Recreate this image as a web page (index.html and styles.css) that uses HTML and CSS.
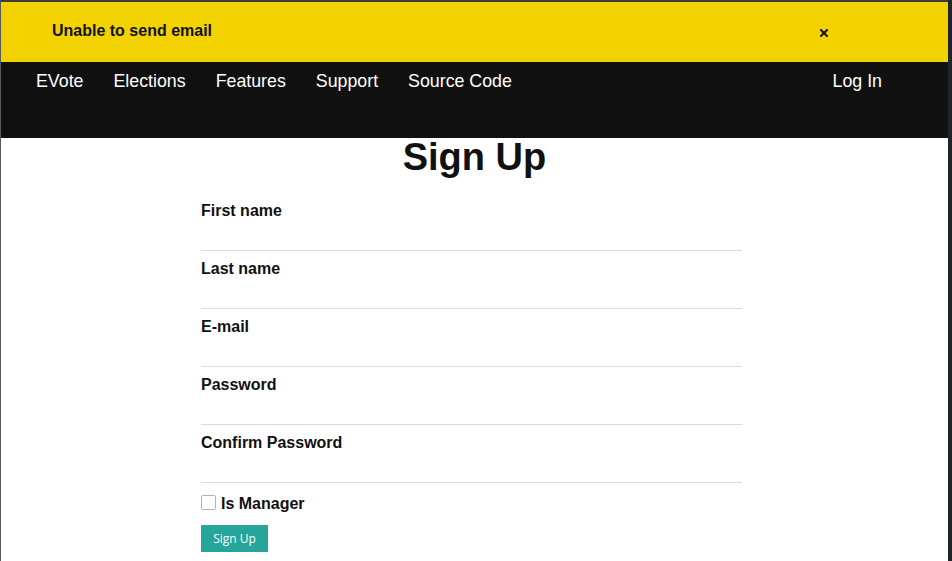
FILE: index.html
```html
<!DOCTYPE html>
<html>
<head>
<meta charset="utf-8">
<link rel="stylesheet" href="styles.css">
</head>
<body>
<div class="frame">
  <div class="banner">
    <span class="banner-text">Unable to send email</span>
    <button class="close" aria-label="close">
      <svg width="8" height="8" viewBox="0 0 8 8"><path d="M1 1L7 7M7 1L1 7" stroke="#111" stroke-width="2" stroke-linecap="square"/></svg>
    </button>
  </div>
  <nav class="nav">
    <ul class="nav-left">
      <li>EVote</li>
      <li>Elections</li>
      <li>Features</li>
      <li>Support</li>
      <li>Source Code</li>
    </ul>
    <ul class="nav-right">
      <li>Log In</li>
    </ul>
  </nav>
  <main class="content">
    <h1 class="title">Sign Up</h1>
    <form class="form">
      <div class="field"><label class="label">First name</label><input class="input" type="text"></div>
      <div class="field"><label class="label">Last name</label><input class="input" type="text"></div>
      <div class="field"><label class="label">E-mail</label><input class="input" type="email"></div>
      <div class="field"><label class="label">Password</label><input class="input" type="password"></div>
      <div class="field"><label class="label">Confirm Password</label><input class="input" type="password"></div>
      <label class="check-row"><input class="check" type="checkbox"><span class="check-label">Is Manager</span></label>
      <button class="submit" type="button">Sign Up</button>
    </form>
  </main>
</div>
</body>
</html>
```

FILE: styles.css
```css
html, body {
  margin: 0;
  padding: 0;
  background: #20242a;
  height: 100%;
}
.frame {
  margin-right: 4px;
  border-top: 2px solid #3c3c3c;
  border-left: 1px solid #5a5a5a;
  background: #fff;
  min-height: 559px;
  font-family: "Liberation Sans", Arial, sans-serif;
  color: #111;
}
.banner {
  height: 60px;
  background: #f2d200;
  display: flex;
  align-items: center;
  padding-left: 51px;
  box-sizing: border-box;
}
.banner-text {
  font-weight: bold;
  font-size: 16px;
  margin-top: -2px;
}
.close {
  margin-left: 608px;
  border: 0;
  background: none;
  padding: 0;
  width: 8px;
  height: 8px;
  display: flex;
  margin-top: 1px;
}
.nav {
  height: 76px;
  background: #111;
  display: flex;
  justify-content: space-between;
  padding: 0 51px 0 20px;
}
.nav ul {
  list-style: none;
  margin: 0;
  padding: 0;
  display: flex;
}
.nav li {
  color: #fff;
  font-size: 17.8px;
  line-height: 38px;
  padding: 0 15px;
}
.content {
  display: flex;
  flex-direction: column;
}
.title {
  margin: 0;
  font-size: 38px;
  line-height: 38px;
  text-align: center;
  font-weight: bold;
  color: #111;
}
.form {
  width: 541px;
  margin: 26px 0 0 200px;
  display: flex;
  flex-direction: column;
  align-items: flex-start;
}
.field {
  display: flex;
  flex-direction: column;
  width: 100%;
  margin-bottom: 9px;
}
.label {
  font-weight: bold;
  font-size: 16px;
  line-height: 18px;
}
.input {
  border: 0;
  border-bottom: 1px solid #dcdcdc;
  height: 31px;
  box-sizing: border-box;
  background: transparent;
  padding: 0;
  outline: none;
}
.check-row {
  display: flex;
  align-items: center;
  gap: 5px;
  margin-top: 3px;
}
.check {
  appearance: none;
  -webkit-appearance: none;
  width: 15px;
  height: 15px;
  margin: 0;
  border: 1px solid #b5b0aa;
  border-radius: 2px;
  background: #fff;
  position: relative;
  top: -2px;
}
.check-label {
  font-weight: bold;
  font-size: 16px;
  line-height: 18px;
}
.submit {
  margin-top: 12px;
  background: #26a69a;
  color: #fff;
  border: 0;
  height: 27px;
  width: 67px;
  padding: 0;
  font-family: "Open Sans", "Noto Sans", sans-serif;
  font-size: 12px;
}
```
